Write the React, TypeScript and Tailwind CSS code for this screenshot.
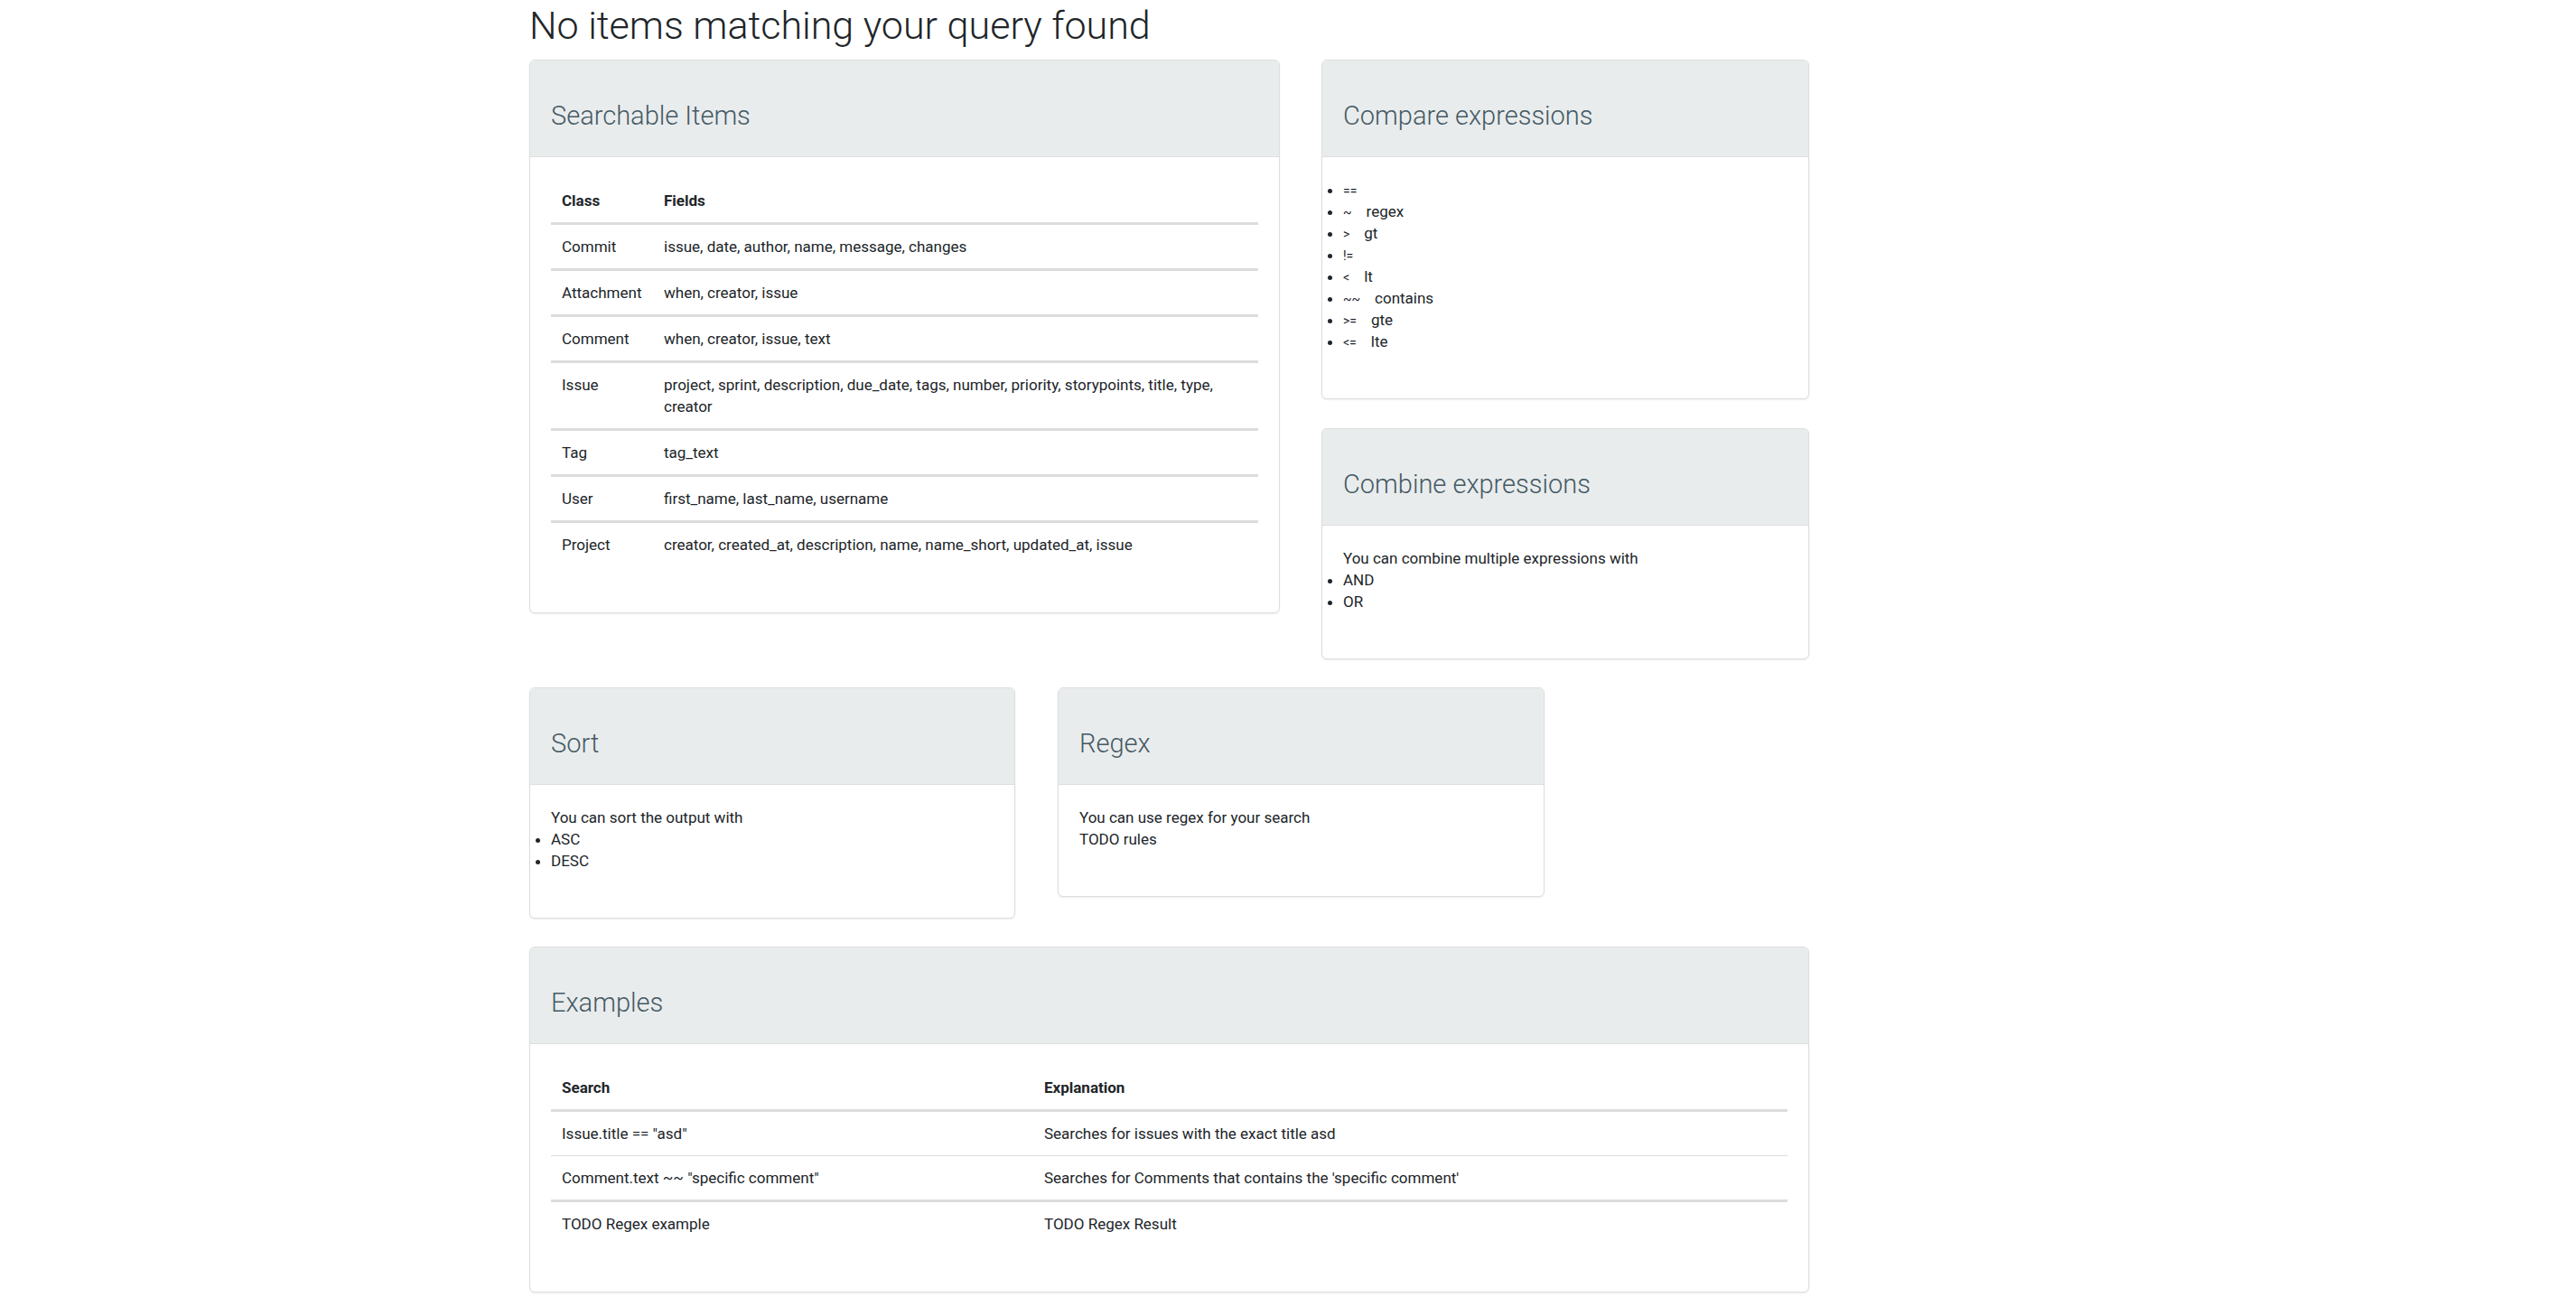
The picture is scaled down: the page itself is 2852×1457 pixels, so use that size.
import React from 'react';

const font = { fontFamily: 'Roboto, "Noto Sans", Arial, sans-serif' };

interface CardProps {
  title: string;
  className?: string;
  children: React.ReactNode;
}

const Card: React.FC<CardProps> = ({ title, className, children }) => (
  <div className={`bg-white border border-[#dedede] rounded-[6px] shadow-[0_1px_2px_rgba(0,0,0,0.08)] overflow-hidden ${className || ''}`}>
    <div className="bg-[#e9eced] border-b border-[#dedede] px-[23px] pt-[43px] pb-[27px]">
      <h2 className="text-[29px] leading-[36px] font-light text-[#455a64]">{title}</h2>
    </div>
    <div className="px-[23px] pt-[24px] pb-[51px] text-[17px] leading-[24px] text-[#212529]">{children}</div>
  </div>
);

const searchable = [
  ['Commit', 'issue, date, author, name, message, changes'],
  ['Attachment', 'when, creator, issue'],
  ['Comment', 'when, creator, issue, text'],
  ['Issue', 'project, sprint, description, due_date, tags, number, priority, storypoints, title, type, creator'],
  ['Tag', 'tag_text'],
  ['User', 'first_name, last_name, username'],
  ['Project', 'creator, created_at, description, name, name_short, updated_at, issue'],
];

const operators: [string, string][] = [
  ['==', ''],
  ['~', 'regex'],
  ['>', 'gt'],
  ['!=', ''],
  ['<', 'lt'],
  ['~~', 'contains'],
  ['>=', 'gte'],
  ['<=', 'lte'],
];

const examples = [
  ['Issue.title == "asd"', 'Searches for issues with the exact title asd', 'border-b'],
  ['Comment.text ~~ "specific comment"', "Searches for Comments that contains the 'specific comment'", 'border-b-[3px]'],
  ['TODO Regex example', 'TODO Regex Result', ''],
];

export default function App() {
  return (
    <div className="min-h-screen bg-white pl-[586px] pt-[2px] pb-[29px]" style={font}>
      <div className="w-[1417px]">
        <h1 className="text-[43px] leading-[52px] font-light text-[#212529] mb-[12px]">No items matching your query found</h1>

        <div className="flex items-start gap-[46px]">
          <Card title="Searchable Items" className="w-[831px]">
            <table className="w-full text-left border-collapse">
              <thead>
                <tr className="border-b-[3px] border-[#dcdcdc]">
                  <th className="px-[12px] py-[12px] w-[113px] font-bold">Class</th>
                  <th className="px-[12px] py-[12px] font-bold">Fields</th>
                </tr>
              </thead>
              <tbody>
                {searchable.map(([cls, fields], i) => (
                  <tr key={cls} className={i < searchable.length - 1 ? 'border-b-[3px] border-[#dcdcdc]' : ''}>
                    <td className="px-[12px] py-[12px] align-top">{cls}</td>
                    <td className="px-[12px] py-[12px] align-top">{fields}</td>
                  </tr>
                ))}
              </tbody>
            </table>
          </Card>

          <div className="w-[540px] flex flex-col gap-[32px]">
            <Card title="Compare expressions">
              <ul className="list-disc list-outside pl-0">
                {operators.map(([op, name]) => (
                  <li key={op} className="h-[24px]">
                    <span className="text-[14px] leading-none mr-[16px]">{op}</span>
                    {name}
                  </li>
                ))}
              </ul>
            </Card>
            <Card title="Combine expressions">
              <p>You can combine multiple expressions with</p>
              <ul className="list-disc list-outside pl-0">
                <li>AND</li>
                <li>OR</li>
              </ul>
            </Card>
          </div>
        </div>

        <div className="flex items-start gap-[47px] mt-[31px]">
          <Card title="Sort" className="w-[538px]">
            <p>You can sort the output with</p>
            <ul className="list-disc list-outside pl-0">
              <li>ASC</li>
              <li>DESC</li>
            </ul>
          </Card>
          <Card title="Regex" className="w-[539px]">
            <p>You can use regex for your search</p>
            <p>TODO rules</p>
          </Card>
        </div>

        <Card title="Examples" className="mt-[31px]">
          <table className="w-full text-left border-collapse">
            <thead>
              <tr className="border-b-[3px] border-[#dcdcdc]">
                <th className="px-[12px] py-[12px] w-[534px] font-bold">Search</th>
                <th className="px-[12px] py-[12px] font-bold">Explanation</th>
              </tr>
            </thead>
            <tbody>
              {examples.map(([search, expl, border]) => (
                <tr key={search} className={`${border} border-[#dcdcdc]`}>
                  <td className="px-[12px] py-[12px]">{search}</td>
                  <td className="px-[12px] py-[12px]">{expl}</td>
                </tr>
              ))}
            </tbody>
          </table>
        </Card>
      </div>
    </div>
  );
}
